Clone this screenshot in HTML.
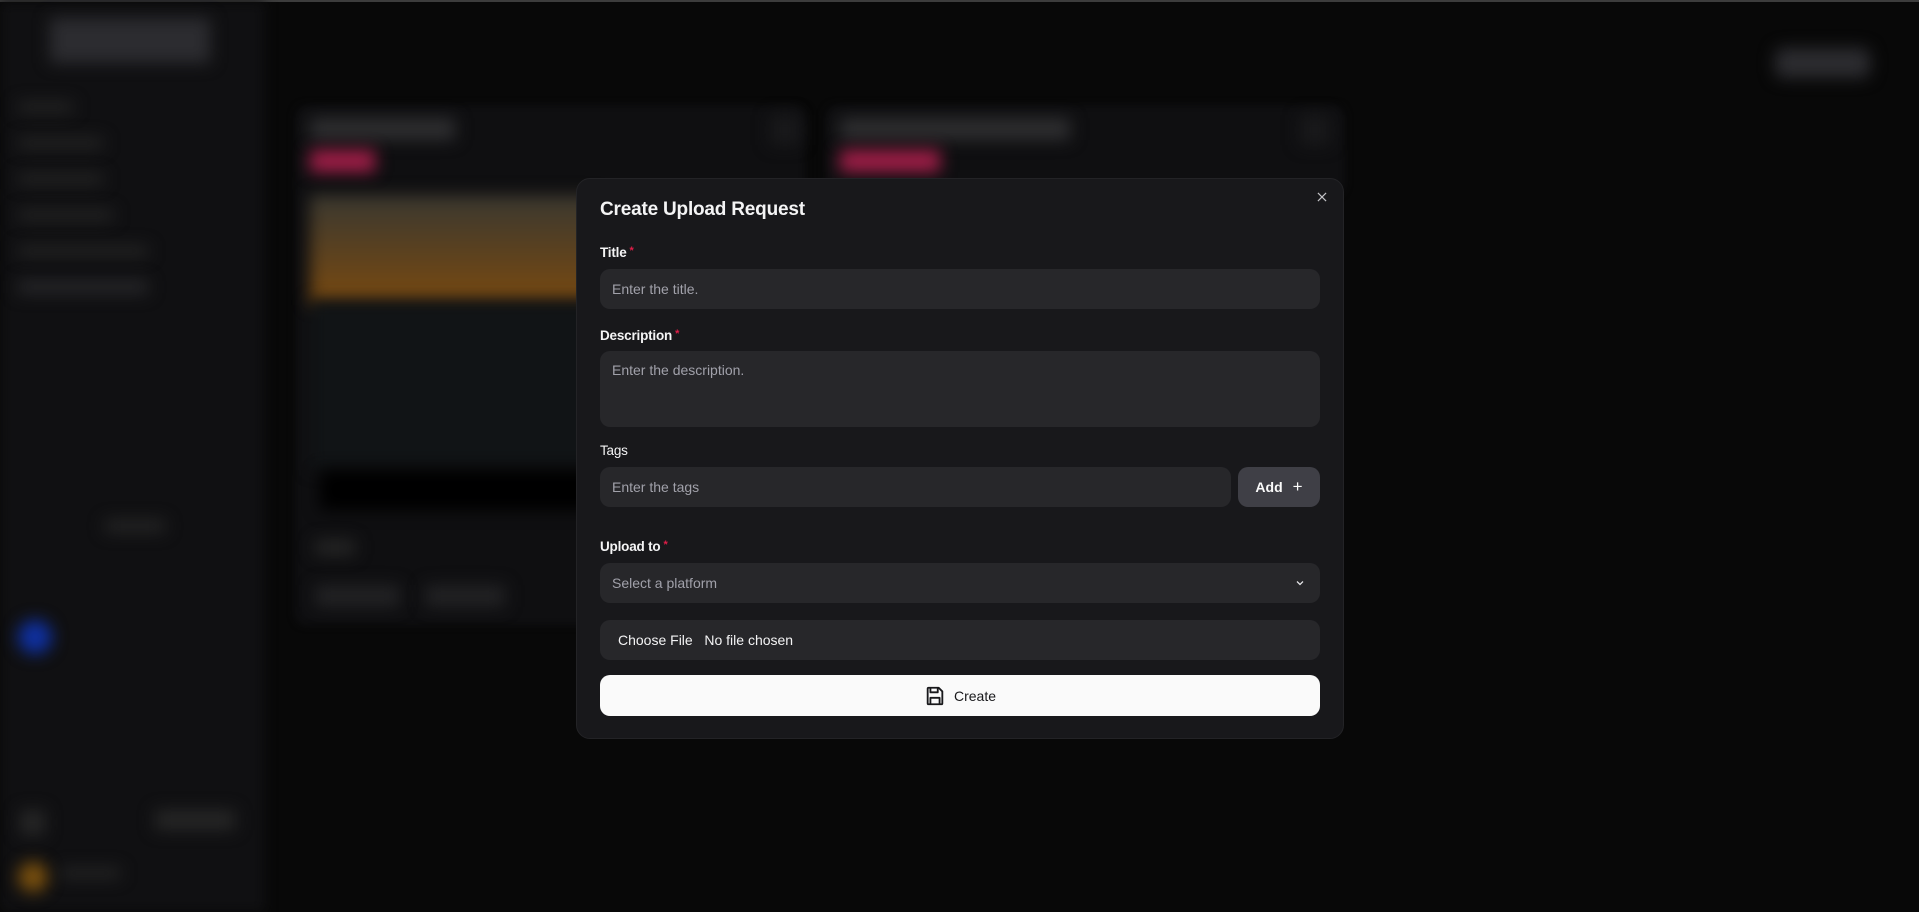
<!DOCTYPE html>
<html><head><meta charset="utf-8"><style>
*{box-sizing:border-box;margin:0;padding:0}
body{width:1919px;height:912px;background:#080808;overflow:hidden;position:relative;font-family:"Liberation Sans",sans-serif;}
.b{position:absolute;filter:blur(8px);}
.topline{position:absolute;left:0;top:0;width:1919px;height:2px;background:#3c3c3c;}
.modal{position:absolute;left:576px;top:178px;width:768px;height:561px;background:#18181b;border:1px solid #232326;border-radius:14px;color:#f4f4f5;}
.h{position:absolute;left:23px;top:20px;font-size:19px;font-weight:bold;letter-spacing:-0.2px}
.lbl{position:absolute;left:23px;font-size:13.5px;font-weight:bold;color:#f4f4f5;letter-spacing:-0.2px}
.lbl span{color:#e11d48;font-size:11px;vertical-align:top;margin-left:3px}
.in{position:absolute;left:23px;width:720px;background:#27272a;border-radius:10px;color:#a1a1aa;font-size:14px;padding-left:12px;display:flex;align-items:center}
.close{position:absolute;right:14px;top:11px}
</style></head><body>
<div class="topline"></div>
<div style="position:absolute;left:0;top:2px;width:265px;height:910px;background:#101012;filter:blur(6px)"></div>
<div class="b" style="left:50px;top:18px;width:160px;height:45px;background:#2c2c30"></div>
<div class="b" style="left:18px;top:102px;width:55px;height:10px;background:#262626"></div>
<div class="b" style="left:18px;top:138px;width:85px;height:10px;background:#262626"></div>
<div class="b" style="left:18px;top:174px;width:85px;height:10px;background:#262626"></div>
<div class="b" style="left:18px;top:210px;width:95px;height:10px;background:#262626"></div>
<div class="b" style="left:18px;top:246px;width:130px;height:10px;background:#262626"></div>
<div class="b" style="left:18px;top:280px;width:130px;height:14px;background:#262629"></div>
<div class="b" style="left:105px;top:520px;width:60px;height:12px;background:#262626"></div>
<div class="b" style="left:18px;top:620px;width:34px;height:34px;border-radius:50%;background:#0f30a0"></div>
<div class="b" style="left:20px;top:810px;width:25px;height:25px;background:#262626"></div>
<div class="b" style="left:155px;top:810px;width:80px;height:20px;background:#262626"></div>
<div class="b" style="left:18px;top:862px;width:30px;height:30px;border-radius:50%;background:#7a500e"></div>
<div class="b" style="left:60px;top:868px;width:60px;height:10px;background:#262626"></div>
<div class="b" style="left:1775px;top:48px;width:95px;height:30px;border-radius:8px;background:#2c2c30"></div>
<div class="b" style="left:295px;top:105px;width:510px;height:520px;background:#0f0f11;border-radius:12px;filter:blur(4px)"></div>
<div class="b" style="left:825px;top:105px;width:520px;height:90px;background:#0f0f11;border-radius:12px;filter:blur(4px)"></div>
<div class="b" style="left:310px;top:118px;width:145px;height:22px;background:#2e2e30"></div>
<div class="b" style="left:310px;top:150px;width:65px;height:22px;background:#a01e48"></div>
<div class="b" style="left:840px;top:118px;width:230px;height:22px;background:#2e2e30"></div>
<div class="b" style="left:840px;top:150px;width:100px;height:22px;background:#a01e48"></div>
<div class="b" style="left:310px;top:195px;width:290px;height:110px;background:linear-gradient(#3a3830,#7a4a10)"></div>
<div class="b" style="left:310px;top:300px;width:290px;height:170px;background:#111416"></div>
<div class="b" style="left:320px;top:470px;width:280px;height:40px;background:#000"></div>
<div class="b" style="left:315px;top:540px;width:40px;height:15px;background:#262626"></div>
<div class="b" style="left:315px;top:585px;width:85px;height:22px;background:#222224"></div>
<div class="b" style="left:425px;top:585px;width:80px;height:22px;background:#222224"></div>
<div class="b" style="left:770px;top:115px;width:30px;height:30px;background:#19191b"></div>
<div class="b" style="left:1300px;top:115px;width:30px;height:30px;background:#19191b"></div>

<div class="modal">
<div class="h">Create Upload Request</div>
<svg class="close" width="14" height="14" viewBox="0 0 24 24" fill="none" stroke="#c4c4c8" stroke-width="2"><path d="M5 5l14 14M19 5L5 19"/></svg>
<div class="lbl" style="top:66px">Title<span>*</span></div>
<div class="in" style="top:90px;height:40px">Enter the title.</div>
<div class="lbl" style="top:149px">Description<span>*</span></div>
<div class="in" style="top:172px;height:76px;align-items:flex-start;padding-top:11px">Enter the description.</div>
<div class="lbl" style="top:264px;font-weight:normal">Tags</div>
<div class="in" style="top:288px;height:40px;width:631px">Enter the tags</div>
<div style="position:absolute;left:661px;top:288px;width:82px;height:40px;background:#3f3f46;border-radius:10px;color:#fafafa;font-size:14px;font-weight:bold;display:flex;align-items:center;justify-content:center;gap:10px">Add <span style="font-weight:normal;font-size:17px">+</span></div>
<div class="lbl" style="top:360px">Upload to<span>*</span></div>
<div class="in" style="top:384px;height:40px">Select a platform
<svg style="position:absolute;right:14px;top:14px" width="12" height="12" viewBox="0 0 24 24" fill="none" stroke="#e4e4e7" stroke-width="2.5"><path d="M6 9l6 6 6-6"/></svg></div>
<div class="in" style="top:441px;height:40px;color:#f4f4f5;padding-left:18px">Choose File&nbsp;&nbsp;&nbsp;No file chosen</div>
<div style="position:absolute;left:23px;top:496px;width:720px;height:41px;background:#fafafa;border-radius:10px;color:#18181b;font-size:14px;display:flex;align-items:center;justify-content:center;gap:8px">
<svg width="22" height="22" viewBox="0 0 24 24" fill="none" stroke="#18181b" stroke-width="2" stroke-linejoin="round"><path d="M5 3h11l4 4v13a1 1 0 0 1-1 1H5a1 1 0 0 1-1-1V4a1 1 0 0 1 1-1z"/><path d="M7 3v5h8V3"/><path d="M7 21v-7h10v7"/></svg>Create</div>
</div>
</body></html>
